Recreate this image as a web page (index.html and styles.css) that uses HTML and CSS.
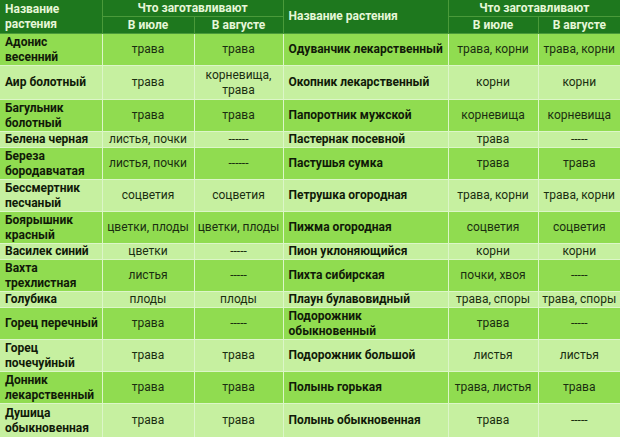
FILE: index.html
```html
<!DOCTYPE html>
<html lang="ru">
<head>
<meta charset="utf-8">
<link rel="stylesheet" href="styles.css">
</head>
<body>
<table class="plants">
  <colgroup>
    <col class="c-name"><col class="c-jul"><col class="c-aug">
    <col class="c-name2"><col class="c-jul2"><col class="c-aug2">
  </colgroup>
  <thead>
    <tr class="h1">
      <th rowspan="2" class="name">Название<br>растения</th>
      <th colspan="2">Что заготавливают</th>
      <th rowspan="2" class="name">Название растения</th>
      <th colspan="2">Что заготавливают</th>
    </tr>
    <tr class="h2">
      <th>В июле</th><th>В августе</th>
      <th>В июле</th><th>В августе</th>
    </tr>
  </thead>
  <tbody>
    <tr class="dark tall"><td class="name">Адонис<br>весенний</td><td>трава</td><td>трава</td><td class="name">Одуванчик лекарственный</td><td>трава, корни</td><td>трава, корни</td></tr>
    <tr class="light tall"><td class="name">Аир болотный</td><td>трава</td><td>корневища,<br>трава</td><td class="name">Окопник лекарственный</td><td>корни</td><td>корни</td></tr>
    <tr class="dark tall"><td class="name">Багульник<br>болотный</td><td>трава</td><td>трава</td><td class="name">Папоротник мужской</td><td>корневища</td><td>корневища</td></tr>
    <tr class="light short"><td class="name">Белена черная</td><td>листья, почки</td><td>------</td><td class="name">Пастернак посевной</td><td>трава</td><td>-----</td></tr>
    <tr class="dark tall"><td class="name">Береза<br>бородавчатая</td><td>листья, почки</td><td>------</td><td class="name">Пастушья сумка</td><td>трава</td><td>трава</td></tr>
    <tr class="light tall"><td class="name">Бессмертник<br>песчаный</td><td>соцветия</td><td>соцветия</td><td class="name">Петрушка огородная</td><td>трава, корни</td><td>трава, корни</td></tr>
    <tr class="dark tall"><td class="name">Боярышник<br>красный</td><td>цветки, плоды</td><td>цветки, плоды</td><td class="name">Пижма огородная</td><td>соцветия</td><td>соцветия</td></tr>
    <tr class="light short"><td class="name">Василек синий</td><td>цветки</td><td>-----</td><td class="name">Пион уклоняющийся</td><td>корни</td><td>корни</td></tr>
    <tr class="dark tall"><td class="name">Вахта<br>трехлистная</td><td>листья</td><td>-----</td><td class="name">Пихта сибирская</td><td>почки, хвоя</td><td>-----</td></tr>
    <tr class="light short"><td class="name">Голубика</td><td>плоды</td><td>плоды</td><td class="name">Плаун булавовидный</td><td>трава, споры</td><td>трава, споры</td></tr>
    <tr class="dark tall"><td class="name">Горец перечный</td><td>трава</td><td>-----</td><td class="name">Подорожник<br>обыкновенный</td><td>трава</td><td>-----</td></tr>
    <tr class="light tall"><td class="name">Горец<br>почечуйный</td><td>трава</td><td>трава</td><td class="name">Подорожник большой</td><td>листья</td><td>листья</td></tr>
    <tr class="dark tall"><td class="name">Донник<br>лекарственный</td><td>трава</td><td>трава</td><td class="name">Полынь горькая</td><td>трава, листья</td><td>трава</td></tr>
    <tr class="light tall"><td class="name">Душица<br>обыкновенная</td><td>трава</td><td>трава</td><td class="name">Полынь обыкновенная</td><td>трава</td><td>-----</td></tr>
  </tbody>
</table>
</body>
</html>
```
FILE: styles.css
```css
html, body {
  margin: 0;
  padding: 0;
  background: #c6f0a0;
}
.plants {
  width: 620px;
  border-collapse: collapse;
  table-layout: fixed;
  font-family: Roboto, "Noto Sans", sans-serif;
  font-size: 12px;
  line-height: 15px;
}
.c-name { width: 102px; }
.c-jul { width: 92px; }
.c-aug { width: 89px; }
.c-name2 { width: 165px; }
.c-jul2 { width: 90px; }
.c-aug2 { width: 82px; }

.plants th {
  background: #1e781e;
  color: #e6f7d8;
  font-weight: 700;
  text-align: center;
  padding: 0 4px;
  border: 1px solid #4a9a3a;
  height: 16px;
  white-space: nowrap;
}
.plants thead tr.h1 th { border-top: none; }
.plants th.name {
  text-align: left;
  padding-left: 5px;
}
.plants th:first-child { border-left: none; }
.plants th:last-child { border-right: none; }

.plants td {
  padding: 0 3px;
  text-align: center;
  vertical-align: middle;
  color: #1a2e10;
  border: 1px solid #dcf6c8;
  white-space: nowrap;
}
.plants tr.tall td { height: 31px; }
.plants tr.short td { height: 15px; }
.plants tbody tr:first-child td { height: 31px; }
.plants tbody tr:nth-child(2) td { height: 33px; }
.plants td:first-child { border-left: none; }
.plants td:last-child { border-right: none; }
.plants tbody tr:last-child td { border-bottom: none; height: 33px; }
.plants td.name {
  text-align: left;
  padding-left: 5px;
  font-weight: 700;
  color: #101a08;
}
tr.dark td { background: #90dc50; }
tr.light td { background: #c6f0a0; }
```
